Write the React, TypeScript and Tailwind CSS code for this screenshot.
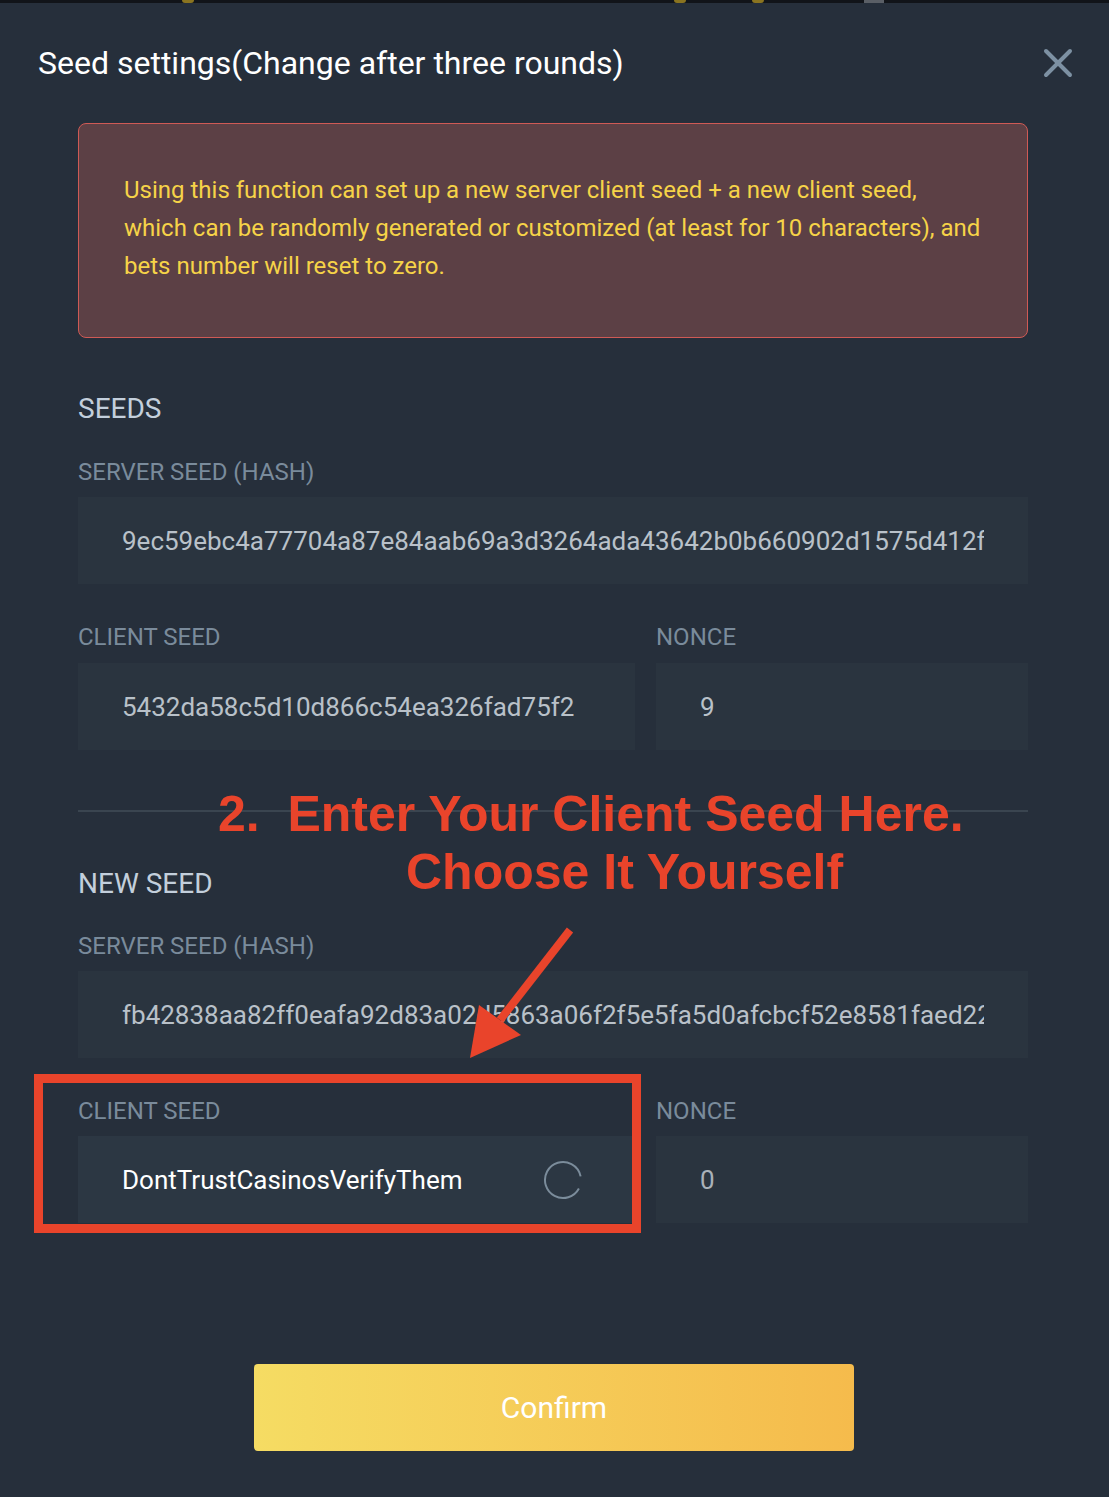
import { X } from "lucide-react";

const label = "text-[24px] leading-[30px] text-[#7a8b9b] uppercase";
const heading = "text-[28px] leading-[32px] text-[#c3cfdc]";
const field = "h-[87px] bg-[#2a343f] flex items-center pl-[44px] pr-[44px] overflow-hidden";
const fieldText = "text-[26px] leading-[30px] text-[#b9c1c9] whitespace-nowrap overflow-hidden";

function Spinner() {
  return (
    <svg width="40" height="40" viewBox="0 0 40 40" className="shrink-0">
      <circle
        cx="20"
        cy="20"
        r="18"
        fill="none"
        stroke="#7b8c9b"
        strokeWidth="2"
        strokeDasharray="100 13"
        transform="rotate(28 20 20)"
      />
    </svg>
  );
}

export default function App() {
  return (
    <div className="relative min-h-[1497px] w-full bg-[#262f3b] font-[Roboto,sans-serif] overflow-hidden">
      {/* strip of the page behind the modal */}
      <div className="h-[3px] bg-[#111419] flex items-start">
        <span className="ml-[182px] w-[12px] h-[3px] rounded-b-full bg-[#8a7420]" />
        <span className="ml-[480px] w-[12px] h-[3px] rounded-b-full bg-[#8a7420]" />
        <span className="ml-[66px] w-[12px] h-[3px] rounded-b-full bg-[#8a7420]" />
        <span className="ml-[100px] w-[20px] h-[3px] bg-[#5a5f66]" />
      </div>

      {/* header */}
      <div className="flex items-center justify-between pl-[38px] pr-[27px] pt-[40px]">
        <h1 className="text-[32px] leading-[40px] text-white">Seed settings(Change after three rounds)</h1>
        <X size={48} strokeWidth={2} className="text-[#7d91a3] -my-[4px]" />
      </div>

      <div className="pl-[78px] pr-[81px] pt-[40px]">
        {/* warning */}
        <div className="rounded-[8px] border border-[#cf5a55] bg-[#5c4045] pl-[45px] pr-[40px] pt-[47px] pb-[52px]">
          <p className="text-[24px] leading-[38px] text-[#f6d348]">
            Using this function can set up a new server client seed + a new client seed,
            <br />
            which can be randomly generated or customized (at least for 10 characters), and
            <br />
            bets number will reset to zero.
          </p>
        </div>

        {/* current seeds */}
        <div className="mt-[55px] flex flex-col">
          <div className={heading}>SEEDS</div>
          <div className={`${label} mt-[32px]`}>SERVER SEED (HASH)</div>
          <div className={`${field} mt-[10px]`}>
            <div className={fieldText}>9ec59ebc4a77704a87e84aab69a3d3264ada43642b0b660902d1575d412f0a7c</div>
          </div>
          <div className="grid grid-cols-[557px_1fr] gap-x-[21px] mt-[38px]">
            <div className="flex flex-col">
              <div className={label}>CLIENT SEED</div>
              <div className={`${field} mt-[11px]`}>
                <div className={fieldText}>5432da58c5d10d866c54ea326fad75f2</div>
              </div>
            </div>
            <div className="flex flex-col">
              <div className={label}>NONCE</div>
              <div className={`${field} mt-[11px]`}>
                <div className={fieldText}>9</div>
              </div>
            </div>
          </div>
        </div>

        <div className="mt-[60px] h-[2px] bg-[#3a4550]" />

        {/* new seed */}
        <div className="mt-[56px] flex flex-col">
          <div className={heading}>NEW SEED</div>
          <div className={`${label} mt-[31px]`}>SERVER SEED (HASH)</div>
          <div className={`${field} mt-[10px]`}>
            <div className={fieldText}>fb42838aa82ff0eafa92d83a02d5863a06f2f5e5fa5d0afcbcf52e8581faed22b1</div>
          </div>
          <div className="grid grid-cols-[557px_1fr] gap-x-[21px] mt-[38px]">
            <div className="flex flex-col">
              <div className={label}>CLIENT SEED</div>
              <div className="h-[87px] bg-[#2c3743] flex items-center justify-between pl-[44px] pr-[52px] mt-[10px]">
                <div className="text-[26px] leading-[30px] text-white whitespace-nowrap">DontTrustCasinosVerifyThem</div>
                <Spinner />
              </div>
            </div>
            <div className="flex flex-col">
              <div className={label}>NONCE</div>
              <div className={`${field} mt-[10px]`}>
                <div className="text-[26px] leading-[30px] text-[#a9b1b9]">0</div>
              </div>
            </div>
          </div>
        </div>

        <div className="mt-[141px] flex justify-center pl-[2px]">
          <button className="w-[600px] h-[87px] rounded-[4px] bg-gradient-to-r from-[#f5dc63] to-[#f5bb4c] text-white text-[30px]">
            Confirm
          </button>
        </div>
      </div>

      {/* annotation overlay */}
      <div className="absolute left-[218px] top-[789px] text-[50px] leading-[50px] font-bold text-[#e9442b] whitespace-pre font-['Liberation_Sans',Arial,sans-serif]">
        2.  Enter Your Client Seed Here.
      </div>
      <div className="absolute left-[406px] top-[847px] text-[50px] leading-[50px] font-bold text-[#e9442b] whitespace-pre font-['Liberation_Sans',Arial,sans-serif]">
        Choose It Yourself
      </div>
      <svg className="absolute left-0 top-0 pointer-events-none" width="1109" height="1497">
        <line x1="570" y1="930" x2="500" y2="1020" stroke="#e9442b" strokeWidth="8" />
        <polygon points="470,1058 479,1005 521,1035" fill="#e9442b" />
      </svg>
      <div className="absolute left-[34px] top-[1074px] w-[607px] h-[159px] border-[9px] border-[#e9442b]" />
    </div>
  );
}
